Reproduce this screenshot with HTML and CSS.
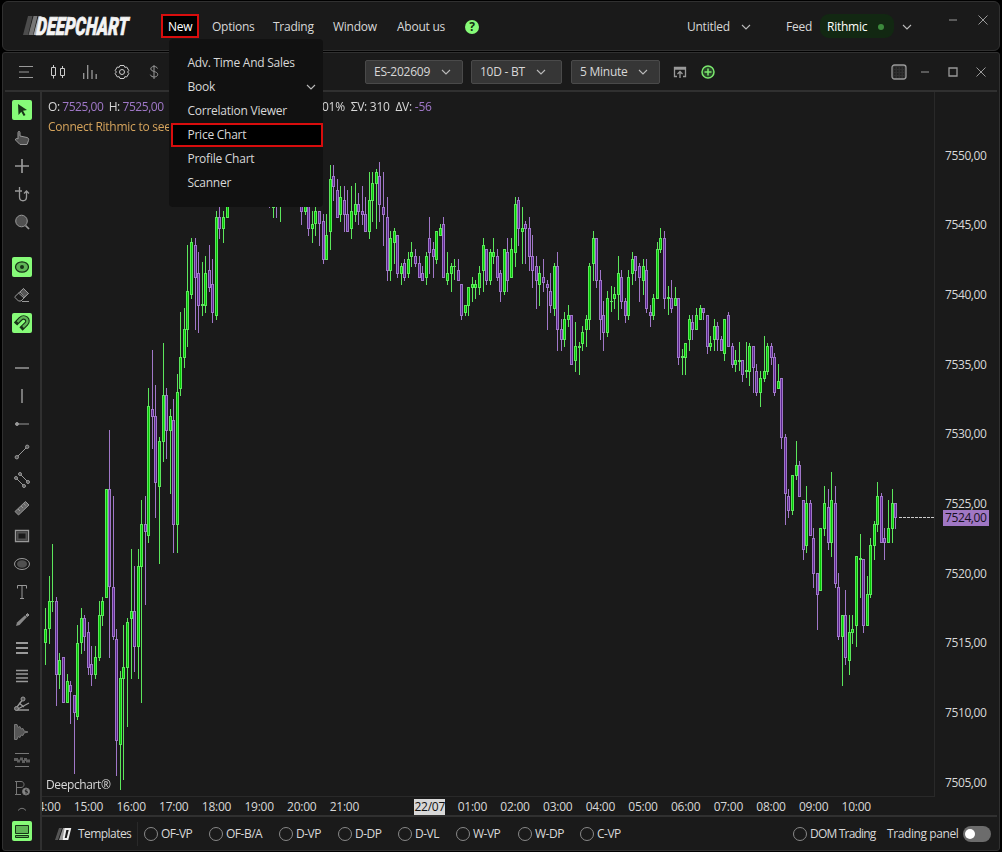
FILE: index.html
```html
<!DOCTYPE html>
<html lang="en">
<head>
    <meta charset="UTF-8">
    <meta name="viewport" content="width=device-width, initial-scale=1.0">
    <title>Deepchart</title>
    <link rel="stylesheet" href="styles.css">
</head>

<body>
    <header class="titlebar">
        <svg class="logo" width="110" height="22" viewBox="0 0 110 22">
            <path d="M5 1h4.500L5 20H0z" fill="#4c4c4c"/>
            <path d="M10.500 1h4L10 20H5.500z" fill="#777"/>
            <path d="M15.500 1h3L14 20h-3.500z" fill="#aaa"/>
            <text class="logo-text" transform="translate(13 20) skewX(-4)" textLength="92" lengthAdjust="spacingAndGlyphs">DEEPCHART</text>
        </svg>
        <nav class="nav">
            <div class="nav-item active">New
                <ul class="menu">
                    <li>Adv. Time And Sales</li>
                    <li>Book <svg class="chev" width="10" height="6"><path d="M1 1l4 4 4-4"/></svg></li>
                    <li>Correlation Viewer</li>
                    <li class="selected">Price Chart</li>
                    <li>Profile Chart</li>
                    <li>Scanner</li>
                </ul>
            </div>
            <div class="nav-item options">Options</div>
            <div class="nav-item trading">Trading</div>
            <div class="nav-item window">Window</div>
            <div class="nav-item about">About us</div>
            <div class="help">?</div>
        </nav>
        <div class="account">
            <span class="workspace">Untitled</span>
            <svg class="chev" width="10" height="6"><path d="M1 1l4 4 4-4"/></svg>
            <span class="feed">Feed</span>
            <span class="pill">Rithmic <i></i></span>
            <svg class="chev" width="10" height="6"><path d="M1 1l4 4 4-4"/></svg>
        </div>
        <div class="win-buttons">
            <svg class="ic" width="10" height="10"><path d="M1 5h8"/></svg>
            <svg class="ic" width="10" height="10"><path d="M.5 .5l9 9M9.500 .5l-9 9"/></svg>
        </div>
    </header>

    <main class="panel">
        <div class="toolbar">
            <div class="tool-left">
                <svg class="ic" width="16" height="16"><path d="M1 2.500h14M1 8h10M1 13.500h14"/></svg>
                <svg class="ic light" width="16" height="16"><path d="M1.500 3.500h4v8h-4zM3.500 1v2.500M3.500 11.500v3M10.500 4.500h4v7h-4zM12.500 2v2.500M12.500 11.500V14"/></svg>
                <svg class="ic" width="16" height="16"><path d="M1.700 9v6M5.700 1v14M10 6v9M14.200 10v5" stroke-width="1.300"/></svg>
                <svg class="ic light" width="16" height="16"><path d="M6 1.500h4l.8 1.800 2-.2 2 3.400L13.600 8l1.200 1.500-2 3.400-2-.2-.8 1.800H6l-.8-1.800-2 .2-2-3.400L2.400 8 1.200 6.500l2-3.400 2 .2z"/><circle cx="8" cy="8" r="2.500"/></svg>
                <svg class="ic" width="16" height="16"><path d="M11.500 4.500C10.500 1.500 4.500 2 4.800 5c.3 3 6.900 2 6.900 5.500 0 3-6.200 3.500-7.400.2M8 1v14"/></svg>
            </div>
            <div class="selects">
                <div class="select symbol">ES-202609 <svg class="chev" width="10" height="6"><path d="M1 1l4 4 4-4"/></svg></div>
                <div class="select days">10D - BT <svg class="chev" width="10" height="6"><path d="M1 1l4 4 4-4"/></svg></div>
                <div class="select period">5 Minute <svg class="chev" width="10" height="6"><path d="M1 1l4 4 4-4"/></svg></div>
            </div>
            <svg class="ic popout" width="14" height="12"><path d="M4 10.500H1.500V1.500h11v9H10M1.500 3h11M7 12V5.500M4.500 8L7 5.500 9.500 8" stroke-width="1.300"/></svg>
            <svg class="add" width="14" height="14"><circle cx="7" cy="7" r="6"/><path d="M7 3.500v7M3.500 7h7"/></svg>
            <div class="panel-buttons">
                <svg class="ic" width="16" height="16"><rect x="1" y="1" width="14" height="14" rx="2.500" fill="#303030" stroke-width="1.300"/><path d="M3 4h10M3 7h10M3 10h10M3 13h10" stroke="#151515" stroke-dasharray="1.500 1.500"/></svg>
                <svg class="ic" width="10" height="10"><path d="M1 5h8"/></svg>
                <svg class="ic" width="10" height="10"><path d="M1 1h8v8H1z" stroke-width="1.300"/></svg>
                <svg class="ic" width="10" height="10"><path d="M.5 .5l9 9M9.500 .5l-9 9"/></svg>
            </div>
        </div>

        <div class="workspace-grid">
            <aside class="sidebar">
                <div class="tools">
                    <div class="tool on"><svg width="20" height="20"><path d="M6 4l9 6-4 .8 2.500 4.200-1.800 1-2.400-4.300L6.500 15z" fill="#173317"/></svg></div>
                    <div class="tool"><svg class="ic" width="16" height="16"><path d="M4 9V2.500C4 1 6 1 6 2.500V6l7 1.500c1.500.5 2 1.500 1.500 3L13 14.500H6L1.500 10C1 8.500 3 8 4 9z" fill="#505050"/></svg></div>
                    <div class="tool"><svg class="ic" width="16" height="16"><path d="M8 1v14M1 8h14" stroke-width="1.700"/></svg></div>
                    <div class="tool"><svg class="ic" width="16" height="16"><path d="M1 5h7M5.500 1v10c0 5 7 5 7 0V5M10 7.500L12.500 5 15 7.500" stroke-width="1.300"/></svg></div>
                    <div class="tool"><svg class="ic" width="16" height="16"><circle cx="7.500" cy="7" r="5.800" fill="#505050"/><path d="M11.500 11.500L15 15" stroke-width="1.700"/></svg></div>
                    <div class="gap"></div>
                    <div class="tool on"><svg width="20" height="20"><ellipse cx="10" cy="10" rx="6.500" ry="5.200" fill="#5fb556" stroke="#173317" stroke-width="1.300"/><circle cx="10" cy="10" r="2" fill="#173317"/></svg></div>
                    <div class="tool"><svg class="ic" width="16" height="16"><path d="M1 9.500L9.500 1.500l5 5L7 14H4.500L1 10.500zM4.500 6l5.500 5M8 14.500h7"/><path d="M6 5l3.500-3.500 5 5L10.500 10z" fill="#555"/></svg></div>
                    <div class="tool on"><svg width="20" height="20"><g fill="none"><path d="M3.500 11L8.500 5.800C12.500 2 18 7 14.200 11L9 16" stroke="#173317" stroke-width="4.600"/><path d="M5.500 9L8.500 5.800C12.500 2 18 7 14.200 11L11 14" stroke="#5fb556" stroke-width="2.400"/></g></svg></div>
                    <div class="gap"></div>
                    <div class="tool"><svg class="ic" width="16" height="16"><path d="M1 8h14" stroke-width="1.500"/></svg></div>
                    <div class="tool"><svg class="ic" width="16" height="16"><path d="M8 1v14" stroke-width="1.500"/></svg></div>
                    <div class="tool"><svg class="ic" width="16" height="16"><path d="M3 8h12"/><circle cx="3" cy="8" r="1.500" fill="#999"/></svg></div>
                    <div class="tool"><svg class="ic" width="16" height="16"><path d="M4 12l8-8"/><circle cx="2.800" cy="13.200" r="1.700" fill="#555"/><circle cx="13.200" cy="2.800" r="1.700" fill="#555"/></svg></div>
                    <div class="tool"><svg class="ic" width="16" height="16"><path d="M6 2l8 8M2 6l8 8"/><circle cx="6" cy="2" r="1.500" fill="#555"/><circle cx="14" cy="10" r="1.500" fill="#555"/><circle cx="2" cy="6" r="1.500" fill="#555"/><circle cx="10" cy="14" r="1.500" fill="#555"/></svg></div>
                    <div class="tool"><svg class="ic" width="16" height="16"><path d="M1 11.500L11.500 1.500l3.500 3.500L4.500 15z" fill="#666"/><path d="M4 9l2 2M7 6l2 2M10 3.500l1.500 2"/></svg></div>
                    <div class="tool"><svg class="ic" width="16" height="16"><path d="M1.500 2.500h13v11h-13z" stroke-width="1.300"/><path d="M3.500 4.500h9v7h-9z" stroke="#505050" stroke-width="2"/></svg></div>
                    <div class="tool"><svg class="ic" width="16" height="16"><ellipse cx="8" cy="8" rx="7.500" ry="5.500"/><ellipse cx="8" cy="8" rx="5" ry="3.800" fill="#505050" stroke="none"/></svg></div>
                    <div class="tool"><svg class="ic" width="16" height="16"><path d="M3.500 4.500v-3h9v3M8 1.500v13M6 14.500h4"/></svg></div>
                    <div class="tool"><svg class="ic" width="16" height="16"><path d="M2 14l1-3.500 8-7.300L13 5 5.500 13z" fill="#888" stroke="none"/><path d="M12 3l1.500-1.500L15 3l-1.500 1.500z" fill="#888"/></svg></div>
                    <div class="tool"><svg class="ic" width="16" height="16"><path d="M2 3h12M2 8h12M2 13h12" stroke-width="2"/></svg></div>
                    <div class="tool"><svg class="ic" width="16" height="16"><path d="M2 2.500h12M2 6h12M2 10h12M2 13.500h12" stroke-width="1.500"/></svg></div>
                    <div class="tool"><svg class="ic" width="16" height="16"><path d="M1.500 13L8 4.500M2 14l13-7M2 14h13M5 7l5 4" stroke-width="1.300"/><circle cx="9" cy="3" r="2" fill="#555"/><circle cx="2.500" cy="12.500" r="2" fill="#666"/></svg></div>
                    <div class="tool"><svg class="ic dim" width="16" height="16"><path d="M.5 .5v15H3l1-3 2 1 1-2.500 2 .5L10 9l4-1-4-1-1-2.500-2 .5L6 2.500l-2 1L3 .5z" fill="#555"/></svg></div>
                    <div class="tool"><svg class="ic dim" width="16" height="16"><path d="M1 1.500h14M1 14.500h14"/><path d="M0 7.500h4M3 9h3M6 7h3M8 9.500h3M10 7.500h3M12 9h4" stroke-width="3" stroke="#606060"/></svg></div>
                    <div class="tool"><svg class="ic dim" width="16" height="16"><path d="M1 1.500h6c4 0 4 6 0 6H3M1 14.500h6M2.500 1v14"/><circle cx="12" cy="11.500" r="3.500" fill="#888"/><path d="M13.300 10h-2v1.500h2V13h-2" stroke="#222"/></svg></div>
                    <div class="tool part"><svg class="ic dim" width="10" height="4"><path d="M1 3.500Q5 -1 9 3.500"/></svg></div>
                </div>
                <div class="tool on bottom-tool"><svg width="20" height="20"><path d="M3.500 4.500h13v8h-13z" fill="#5fb556" stroke="#173317"/><path d="M3.500 14.500h13v2h-13z" fill="#5fb556" stroke="#173317"/></svg></div>
            </aside>

            <section class="content">
                <div class="chart">
                    <div class="plot">
                        <canvas id="candles" width="892" height="704"></canvas>
                        <div class="quote">
                            <p class="ohlc">O: <b>7525,00</b>&nbsp; H: <b>7525,00</b></p>
                            <p class="stats">01% &nbsp;ΣV: 310 &nbsp;ΔV: <b>-56</b></p>
                            <p class="notice">Connect Rithmic to see</p>
                        </div>
                        <p class="brand">Deepchart®</p>
                    </div>
                    <div class="prices">
                        <span>7550,00</span><span>7545,00</span><span>7540,00</span><span>7535,00</span><span>7530,00</span>
                        <span>7525,00</span><span>7520,00</span><span>7515,00</span><span>7510,00</span><span>7505,00</span>
                        <em class="last">7524,00</em>
                    </div>
                    <div class="times">
                        <span>14:00</span><span>15:00</span><span>16:00</span><span>17:00</span><span>18:00</span>
                        <span>19:00</span><span>20:00</span><span>21:00</span><span></span><span><em>22/07</em></span>
                        <span>01:00</span><span>02:00</span><span>03:00</span><span>04:00</span><span>05:00</span>
                        <span>06:00</span><span>07:00</span><span>08:00</span><span>09:00</span><span>10:00</span>
                    </div>
                </div>

                <footer class="statusbar">
                    <svg class="mini-logo" width="17" height="12"><path d="M4 0h3L3 12H0z" fill="#555"/><path d="M8 0h3L7 12H4z" fill="#999"/><path d="M10.500 1H15l-2.500 10H8.500z" fill="none" stroke="#eee" stroke-width="2"/></svg>
                    <span class="templates">Templates</span>
                    <div class="radios">
                        <label class="w65">OF-VP</label>
                        <label class="w70">OF-B/A</label>
                        <label class="w59">D-VP</label>
                        <label class="w60">D-DP</label>
                        <label class="w58">D-VL</label>
                        <label class="w62">W-VP</label>
                        <label class="w63">W-DP</label>
                        <label>C-VP</label>
                    </div>
                    <div class="trading-panel">
                        <label class="dom">DOM Trading</label>
                        <span>Trading panel</span>
                        <div class="toggle"></div>
                    </div>
                </footer>
            </section>
        </div>
    </main>

    <script src="chart.js"></script>
</body>
</html>
```
FILE: styles.css
```css
* {
    box-sizing: border-box;
}

body {
    margin: 0;
    padding: 1px 2px;
    width: 1002px;
    height: 852px;
    overflow: hidden;
    background-color: #000;
    color: #d8d8d8;
    font-family: "Open Sans", "Noto Sans", sans-serif;
    font-size: 12px;
    letter-spacing: -0.25px;
    line-height: 16px;
    white-space: nowrap;
}

p, ul {
    margin: 0;
    padding: 0;
}

svg {
    display: block;
    flex: none;
}

.ic {
    fill: none;
    stroke: #999;
    stroke-width: 1;
}

.ic.light {
    stroke: #ccc;
}

.ic.dim {
    stroke: #777;
}

.chev {
    fill: none;
    stroke: #bbb;
    stroke-width: 1.1;
}

/* title bar */
.titlebar {
    display: flex;
    align-items: center;
    height: 50px;
    padding-left: 20px;
    border: 1px solid #303030;
    border-radius: 6px;
    background-color: #1a1a1a;
}

.logo-text {
    fill: #f4f4f4;
    stroke: #f4f4f4;
    stroke-width: 0.7px;
    font-family: Roboto, sans-serif;
    font-size: 25px;
    font-weight: 900;
    font-style: italic;
    letter-spacing: 0;
}

.nav {
    display: flex;
    align-items: center;
    height: 24px;
    margin-left: 28px;
    padding-top: 1px;
}

.nav-item.active {
    position: relative;
    width: 38px;
    height: 24px;
    margin-top: -1px;
    padding: 3px 0 0 5px;
    border: 2px solid #d80d0d;
    background-color: #000;
    color: #fff;
}

.options {
    width: 61px;
    margin-left: 13px;
}

.trading {
    width: 60px;
}

.window {
    width: 64px;
}

.about {
    width: 68px;
}

.help {
    width: 14px;
    height: 14px;
    border-radius: 50%;
    background-color: #86fb78;
    color: #123012;
    font-weight: bold;
    line-height: 14px;
    text-align: center;
}

.menu {
    position: absolute;
    z-index: 5;
    top: 23px;
    left: 6px;
    width: 154px;
    height: 168px;
    padding-top: 12px;
    border-radius: 4px;
    background-color: #111;
    color: #d8d8d8;
    list-style: none;
}

.menu li {
    display: flex;
    align-items: center;
    justify-content: space-between;
    height: 24px;
    padding: 0 7px 0 18.5px;
}

.menu .selected {
    margin-left: 2px;
    padding-left: 14.5px;
    border: 2px solid #d80d0d;
    background-color: #000;
}

.account {
    display: flex;
    align-items: center;
    margin-left: auto;
    height: 24px;
    padding-top: 1px;
}

.workspace {
    width: 54px;
}

.feed {
    width: 34px;
    margin-left: 35px;
}

.pill {
    display: flex;
    align-items: center;
    justify-content: space-between;
    width: 74px;
    height: 24px;
    margin: -1px 8px 0 0;
    padding: 1px 10px 0 7px;
    border-radius: 9px;
    background-color: #122812;
    color: #fff;
}

.pill i {
    width: 6px;
    height: 6px;
    border-radius: 50%;
    background-color: #3c8a3c;
}

.win-buttons {
    display: flex;
    gap: 20px;
    margin: -13px 11px 0 36px;
}

/* chart window */
.panel {
    height: 799px;
    margin-top: 1px;
    padding: 0 2px;
    border: 1px solid #303030;
    border-radius: 3px;
    background-color: #1a1a1a;
}

.toolbar {
    display: flex;
    align-items: center;
    height: 39px;
    border-bottom: 2px solid #303030;
}

.tool-left {
    display: flex;
    gap: 16px;
    width: 347px;
    padding-left: 13px;
}

.selects {
    display: flex;
    gap: 8px;
    margin-left: 13px;
}

.select {
    display: flex;
    align-items: center;
    justify-content: space-between;
    height: 24px;
    padding: 1px 11px 0 8px;
    border: 1px solid #4a4a4a;
    border-radius: 2px;
    background-color: #363636;
}

.symbol {
    width: 98px;
}

.days {
    width: 91px;
    padding-right: 15px;
}

.period {
    width: 89px;
    margin-left: 1px;
}

.popout {
    margin-left: 13px;
}

.add {
    margin-left: 14px;
    fill: #284428;
    stroke: #7be86e;
    stroke-width: 1.5;
}

.panel-buttons {
    display: flex;
    align-items: center;
    gap: 18px;
    margin: 0 11px 0 auto;
}

.panel-buttons svg:first-child {
    margin-right: -5px;
}

.workspace-grid {
    display: grid;
    grid-template-columns: 37px 1fr;
    height: 758px;
}

.sidebar {
    display: flex;
    flex-direction: column;
    border-right: 2px solid #303030;
}

.tools {
    height: 720px;
    padding-top: 4px;
    overflow: hidden;
}

.tool {
    display: flex;
    align-items: center;
    justify-content: center;
    height: 28px;
    padding-right: 1px;
}

.tool.on svg {
    border-radius: 2px;
    background-color: #86fb78;
}

.tool.part {
    height: 14px;
}

.gap {
    height: 17px;
}

.bottom-tool {
    margin-top: 5px;
}

.content {
    display: grid;
    grid-template-rows: 723px 1fr;
}

.chart {
    display: grid;
    grid-template-columns: 893px 1fr;
    grid-template-rows: 705px 18px;
}

.plot {
    position: relative;
    border-right: 1px solid #292929;
    border-bottom: 1px solid #292929;
}

.plot canvas {
    display: block;
}

.quote,
.brand {
    position: absolute;
    top: 7px;
    left: 6px;
}

.quote {
    display: grid;
    grid-template-columns: 274px auto;
    row-gap: 4px;
    letter-spacing: -0.45px;
}

.stats {
    letter-spacing: -0.25px;
}

.quote b {
    color: #a078c8;
    font-weight: normal;
}

.notice {
    color: #d6a45c;
    letter-spacing: -0.25px;
}

.brand {
    top: 685px;
    left: 4px;
    letter-spacing: -0.4px;
}

.prices {
    position: relative;
    display: flex;
    flex-direction: column;
    gap: 53.65px;
    padding: 55.8px 0 0 10px;
    letter-spacing: -0.4px;
}

.prices span {
    height: 16px;
}

.prices .last {
    position: absolute;
    top: 418px;
    left: 8px;
    width: 46px;
    height: 16px;
    padding-left: 2px;
    background-color: #a077c4;
    color: #171020;
    font-style: normal;
}

.times {
    display: flex;
    grid-column: 1 / 3;
    padding-top: 2px;
    overflow: hidden;
    text-align: center;
}

.times span {
    flex: none;
    width: 42.66px;
}

.times span:first-child {
    margin-left: -17.5px;
}

.times em {
    display: inline-block;
    width: 31px;
    height: 16px;
    background-color: #d8d8d8;
    color: #111;
    font-style: normal;
}

.statusbar {
    display: flex;
    align-items: center;
    padding-left: 13px;
    border-top: 2px solid #303030;
}

.templates {
    width: 59px;
    margin-left: 6px;
    padding-top: 1px;
    letter-spacing: -0.55px;
}

.radios {
    display: flex;
    height: 24px;
    border-left: 1px solid #292929;
}

label {
    display: flex;
    align-items: center;
    gap: 3px;
    letter-spacing: -0.5px;
}

label::before {
    content: "";
    flex: none;
    width: 12px;
    height: 12px;
    border: 1px solid #888;
    border-radius: 50%;
}

.radios label:first-child {
    margin-left: 6px;
}

.w65 { width: 65px; }
.w70 { width: 70px; }
.w59 { width: 59px; }
.w60 { width: 60px; }
.w58 { width: 58px; }
.w62 { width: 62px; }
.w63 { width: 62px; }

.trading-panel {
    display: flex;
    align-items: center;
    margin: 0 6px 0 auto;
}

.trading-panel .dom {
    width: 81px;
    letter-spacing: -0.8px;
}

.trading-panel span {
    width: 76px;
    margin-left: 13px;
    padding-top: 1px;
    letter-spacing: -0.4px;
}

.toggle {
    width: 28px;
    height: 16px;
    padding: 3px 2px;
    border-radius: 8px;
    background-color: #6c6c6c;
}

.toggle::before {
    content: "";
    display: block;
    width: 10px;
    height: 10px;
    border-radius: 50%;
    background-color: #fff;
}
```
FILE: chart.js
```js
// one candle per 5 minutes: direction, wick top, body top, body bottom, wick bottom
const candles = `
u 608 629 643 665|u 576 601 629 644|u 544 601 602 612|d 597 601 675 706|u 653 660 675 689
d 657 657 703 703|u 674 681 703 703|d 681 685 692 724|d 695 695 713 774|u 625 643 717 720
u 608 618 643 654|d 615 618 637 651|d 622 632 668 675|d 646 664 675 686|u 646 657 675 679
u 601 615 658 661|u 597 601 616 626|u 489 489 598 598|d 430 489 587 658|d 496 587 637 640
d 629 639 741 776|u 671 678 745 790|u 625 667 679 780|u 618 622 668 727|u 549 611 619 679
d 566 611 647 672|u 549 566 647 679|u 500 524 567 703|d 496 524 532 605|u 388 406 536 543
d 350 409 417 449|d 385 416 483 518|u 437 441 487 564|u 343 395 442 462|d 388 395 431 459
u 409 416 431 494|d 399 420 525 553|u 374 392 525 553|u 312 357 389 396|u 308 329 358 368
u 245 291 330 347|u 238 242 295 299|d 238 245 278 330|d 252 273 306 333|u 262 304 306 316
u 256 273 306 313|d 245 270 288 292|d 259 284 313 323|u 211 217 316 320|d 200 217 229 239
u 211 217 229 243|u 180 190 218 218|u 170 180 195 200|d 165 170 180 190|u 160 165 180 195
u 150 160 170 180|d 150 155 170 180|u 145 150 170 180|d 150 155 175 185|u 150 160 175 190
d 155 160 180 190|u 160 165 180 195|d 160 170 185 200|d 170 180 200 208|u 170 195 208 218
d 170 180 195 218|u 170 180 195 222|d 165 170 180 195|u 160 165 180 195|u 155 160 170 185
d 150 160 175 190|d 160 170 190 200|d 170 190 212 225|u 170 200 212 215|d 185 195 229 236
u 211 224 229 243|u 200 211 224 236|d 211 211 224 246|d 214 221 260 264|u 214 235 260 260
u 165 179 232 250|d 165 176 187 201|d 179 190 218 218|u 186 197 215 222|d 186 200 215 232
d 190 214 232 232|u 186 211 229 239|u 183 204 215 222|d 193 204 212 225|d 186 211 215 225
d 197 214 232 232|u 172 200 232 239|u 172 183 201 222|u 169 172 184 229|d 162 176 205 222
d 172 207 215 246|d 197 217 271 281|u 231 238 271 281|u 228 231 243 264|d 235 235 274 278
u 263 266 274 285|d 259 263 278 281|u 252 259 274 278|u 242 252 257 267|d 249 256 264 267
d 256 263 278 278|d 266 273 281 281|u 252 256 278 285|d 217 238 253 274|d 242 249 257 278
u 231 231 260 264|u 224 228 236 236|d 217 224 278 278|u 252 273 281 285|u 263 266 274 292
u 259 266 267 280|d 259 270 281 281|d 284 284 316 320|u 305 305 313 316|u 287 287 306 316
u 277 284 288 302|u 280 284 288 299|u 266 273 288 295|u 238 245 271 292|d 249 249 281 285
u 249 252 281 285|u 238 252 257 264|d 249 256 278 281|d 270 273 292 302|u 249 249 292 295
d 238 252 281 292|u 238 249 278 278|u 197 204 253 267|d 197 200 229 246|u 207 228 232 264
d 221 224 229 264|d 217 228 257 271|d 235 256 271 288|d 256 266 281 309|u 266 273 285 306
d 259 277 283 292|d 280 284 288 330|d 273 291 306 313|u 263 266 309 316|d 252 266 330 351
d 319 329 340 351|u 312 319 340 347|u 305 315 320 327|d 315 315 365 365|u 322 346 361 372
u 342 346 348 375|u 326 332 344 351|u 315 319 330 347|u 263 266 320 330|u 231 238 264 281
d 238 238 281 288|d 270 280 320 340|d 301 315 333 351|u 291 298 333 337|u 286 301 302 312
u 287 294 299 309|u 256 273 295 320|d 270 277 302 309|d 298 301 316 323|u 270 277 316 320
u 252 259 274 285|d 256 256 271 281|d 263 266 278 302|u 259 266 281 295|d 259 270 309 313
d 305 312 316 327|u 294 298 316 320|u 242 249 299 299|u 228 238 250 253|d 231 238 299 309
u 286 297 299 315|d 280 298 309 313|u 287 298 306 306|d 298 298 358 365|u 349 356 358 375
u 343 343 358 375|u 315 319 340 351|d 315 322 330 340|u 308 315 330 330|u 305 308 320 320
d 308 308 313 320|d 315 315 347 354|u 336 343 347 351|u 319 326 340 351|d 322 326 340 351
d 336 339 351 351|u 319 319 354 361|d 312 315 347 347|d 343 346 365 368|u 350 360 365 372
u 342 360 362 371|d 360 360 375 382|u 342 370 372 378|u 343 346 372 386|d 346 346 368 393
d 364 371 393 396|u 371 378 393 407|u 336 371 379 382|u 343 346 372 375|d 343 346 358 365
d 353 357 393 396|u 364 381 389 389|d 378 378 438 449|d 434 437 494 525|d 489 496 511 518
u 475 475 511 515|u 441 465 476 480|d 461 465 497 497|d 500 500 550 560|u 486 503 546 553
d 500 503 536 536|d 528 538 574 588|d 573 573 595 630|u 528 528 591 591|u 486 503 529 536
d 489 507 543 550|u 472 500 543 557|d 486 503 584 588|d 573 587 637 640|u 615 615 637 686
d 590 615 658 665|u 615 632 661 675|u 615 629 633 644|u 556 556 626 647|u 534 558 560 598
d 559 559 626 633|u 576 594 626 626|u 538 545 595 598|u 521 524 546 560|u 482 496 525 532
d 493 496 543 543|d 528 538 543 560|u 500 528 543 543|u 489 503 529 543|d 503 503 518 529
`.trim().split(/[|\n]/);

const LEFT = 42;
const TOP = 92;
const STEP = 3.556;

const ctx = document.getElementById('candles').getContext('2d');

candles.forEach((row, i) => {
    const [dir, ...values] = row.split(' ');
    const [high, top, bottom, low] = values.map(v => Number(v) - TOP);
    const x = Math.floor(45.7 + i * STEP) - LEFT;
    const up = dir === 'u';

    // wick
    ctx.fillStyle = up ? '#5ce65c' : '#a077c8';
    ctx.fillRect(x, high, 1, low - high);

    // body with a 1px outline
    ctx.fillRect(x - 1, top, 3, Math.max(bottom - top, 1));
    ctx.fillStyle = up ? '#00c800' : '#5c2591';
    if (bottom - top > 2) {
        ctx.fillRect(x, top + 1, 1, bottom - top - 2);
    }
});

// dashed line at the last price
ctx.fillStyle = '#ccc';
for (let x = 857; x < 892; x += 4) {
    ctx.fillRect(x, 425, 3, 1);
}
```
